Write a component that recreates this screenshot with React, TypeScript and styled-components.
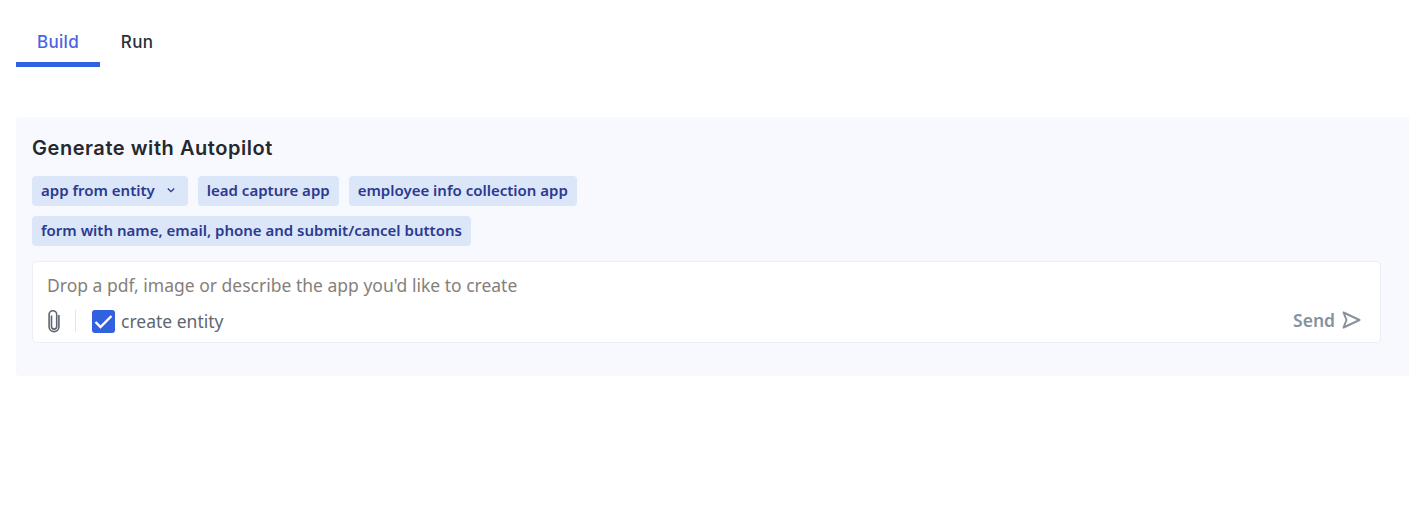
import React from "react";
import styled, { createGlobalStyle } from "styled-components";

const Global = createGlobalStyle`
  html, body { margin: 0; padding: 0; background: #fff; }
  body { font-family: "Noto Sans", sans-serif; }
`;

const Page = styled.div`
  padding: 16px 0 0 16px;
  height: 496px;
  display: flex;
  flex-direction: column;
`;

const Tabs = styled.div`
  display: flex;
  height: 51px;
`;

const Tab = styled.div<{ $active?: boolean }>`
  box-sizing: border-box;
  width: ${(p) => (p.$active ? 84 : 74)}px;
  height: 51px;
  padding-top: 16px;
  text-align: center;
  font-family: Inter, sans-serif;
  font-size: 17px;
  letter-spacing: 0.3px;
  line-height: 20px;
  font-weight: 500;
  color: ${(p) => (p.$active ? "#4a63e0" : "#2a2e36")};
  border-bottom: ${(p) => (p.$active ? "5px solid #3160e0" : "none")};
`;

const Panel = styled.section`
  margin-top: 50px;
  box-sizing: border-box;
  height: 259px;
  padding: 18px 28px 0 16px;
  background: #f7f9fe;
  border-radius: 4px 0 0 4px;
`;

const Title = styled.h2`
  margin: 0;
  font-family: Inter, sans-serif;
  font-size: 20px;
  letter-spacing: 0.55px;
  line-height: 26px;
  font-weight: 600;
  color: #25282f;
`;

const Chips = styled.div`
  margin-top: 15px;
  display: flex;
  flex-wrap: wrap;
  gap: 10px;
  max-width: 800px;
`;

const Chip = styled.button`
  box-sizing: border-box;
  height: 30px;
  padding: 0 9px 2px;
  display: inline-flex;
  align-items: center;
  gap: 10px;
  border: none;
  border-radius: 4px;
  background: #dbe6f8;
  color: #2b3990;
  font-family: "Noto Sans", sans-serif;
  font-size: 15px;
  font-weight: 600;
  line-height: 20px;
  white-space: nowrap;
`;

const Chevron = styled.svg`
  margin-right: 2px;
`;

const Composer = styled.div`
  margin-top: 15px;
  box-sizing: border-box;
  height: 82px;
  padding: 11px 19px 0 14px;
  background: #fff;
  border: 1px solid #ebeef4;
  border-radius: 5px;
`;

const Prompt = styled.div`
  font-size: 17.5px;
  line-height: 24px;
  color: #857f7a;
`;

const Controls = styled.div`
  margin-top: 11px;
  display: flex;
  align-items: center;
  height: 26px;
`;

const Divider = styled.span`
  width: 1px;
  height: 22px;
  margin: 0 16px 0 14px;
  background: #e2e6ec;
`;

const Box = styled.span`
  width: 23px;
  height: 23px;
  border-radius: 3px;
  background: #3160e0;
  display: flex;
  align-items: center;
  justify-content: center;
`;

const CheckLabel = styled.span`
  margin-left: 6px;
  font-size: 17.5px;
  line-height: 24px;
  color: #5e6672;
`;

const Send = styled.div`
  margin-left: auto;
  margin-top: -2px;
  display: flex;
  align-items: center;
  gap: 7px;
  font-size: 17.5px;
  font-weight: 600;
  line-height: 24px;
  color: #87929f;
`;

export default function App() {
  return (
    <>
      <Global />
      <Page>
        <Tabs>
          <Tab $active>Build</Tab>
          <Tab>Run</Tab>
        </Tabs>
        <Panel>
          <Title>Generate with Autopilot</Title>
          <Chips>
            <Chip>
              app from entity
              <Chevron width="12" height="12" viewBox="0 0 12 12" fill="none" stroke="#2b3990" strokeWidth="1.3">
                <path d="M2.8 4.5 6 7.7l3.2-3.2" />
              </Chevron>
            </Chip>
            <Chip>lead capture app</Chip>
            <Chip>employee info collection app</Chip>
            <Chip>form with name, email, phone and submit/cancel buttons</Chip>
          </Chips>
          <Composer>
            <Prompt>Drop a pdf, image or describe the app you'd like to create</Prompt>
            <Controls>
              <svg width="14" height="24" viewBox="0 0 14 24" fill="none" stroke="#5f6670" strokeWidth="1.6">
                <path d="M4.5 6.5v11a2.6 2.6 0 0 0 5.2 0V5.5a3.8 3.8 0 0 0-7.6 0v12.2a4.9 4.9 0 0 0 9.8 0V6" />
              </svg>
              <Divider />
              <Box>
                <svg width="19" height="15" viewBox="0 0 19 15" fill="none" stroke="#fff" strokeWidth="2.4">
                  <path d="M1.5 8 6.5 13 17.5 2" />
                </svg>
              </Box>
              <CheckLabel>create entity</CheckLabel>
              <Send>
                Send
                <svg width="19" height="18" viewBox="0 0 19 18" fill="none" stroke="#87929f" strokeWidth="2" strokeLinejoin="round">
                  <path d="M1.5 1.5 17.5 9 1.5 16.5 4.5 9z" />
                </svg>
              </Send>
            </Controls>
          </Composer>
        </Panel>
      </Page>
    </>
  );
}
